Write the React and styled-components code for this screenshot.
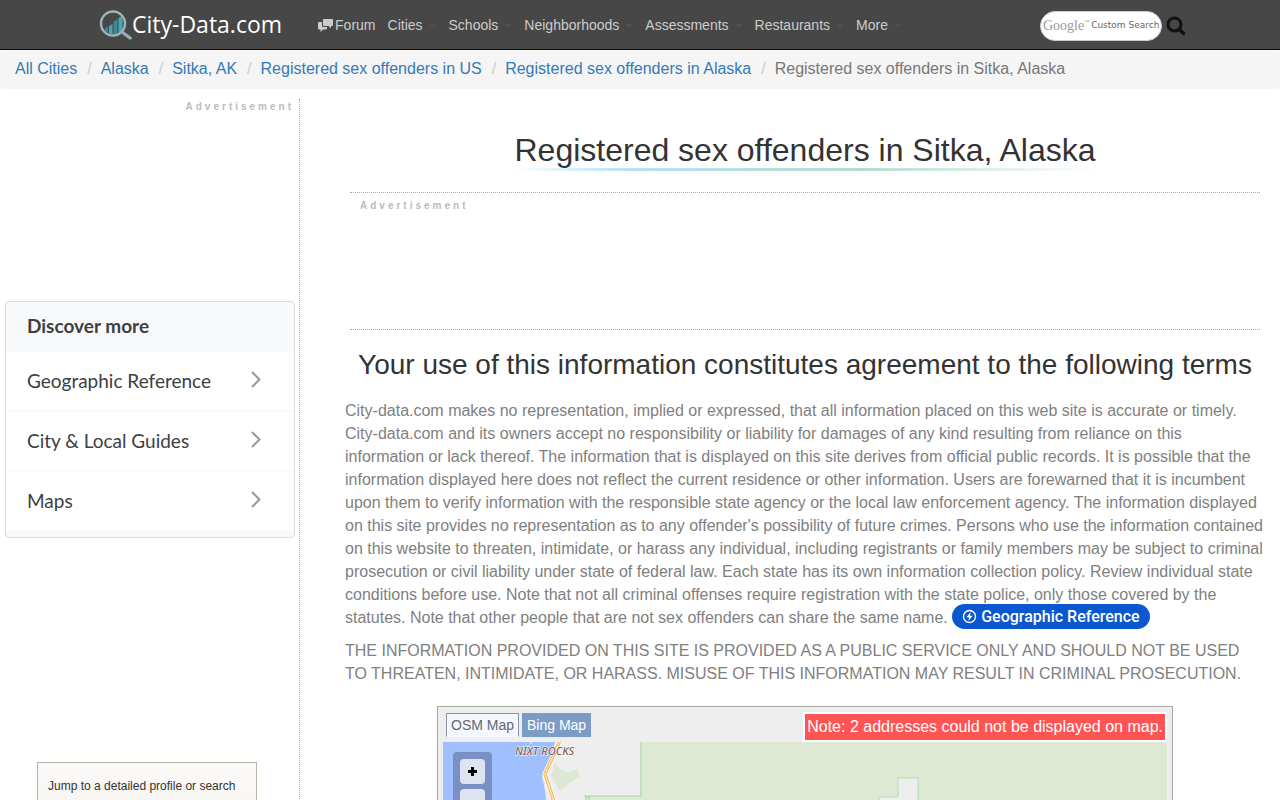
import styled, { createGlobalStyle } from "styled-components";

const GlobalStyle = createGlobalStyle`
  *,
  *::before,
  *::after {
    box-sizing: border-box;
  }

  body {
    margin: 0;
    background-color: #fff;
    color: #808080;
    font-family: "Liberation Sans", Arial, sans-serif;
    font-size: 16px;
    line-height: 23px;
  }

  a {
    color: #337ab7;
    text-decoration: none;
  }

  button,
  input {
    font: inherit;
  }
`;

const Page = styled.div`
  height: 100vh;
  overflow: hidden;
`;

/* header */

const Header = styled.header`
  display: flex;
  align-items: center;
  height: 50px;
  padding: 2px 94px 0 99px;
  background-color: #474747;
  border-bottom: 1px solid #080808;
`;

const Logo = styled.a`
  display: flex;
  align-items: center;
  margin-bottom: 2px;
  color: #fff;
  font-family: "Open Sans", "Noto Sans", sans-serif;
  font-size: 23px;
  font-weight: 500;
  white-space: nowrap;
`;

const Nav = styled.nav`
  display: flex;
  gap: 12px;
  margin-left: 36px;
`;

const NavLink = styled.a`
  display: flex;
  align-items: center;
  gap: ${(props) => (props.$menu ? "6px" : "2px")};
  color: #ccc;
  font-size: 14px;

  ${(props) =>
    props.$menu &&
    `&::after {
      content: "";
      border: 4px solid transparent;
      border-top-color: #4f4f4f;
      border-bottom: 0;
    }`}
`;

const Search = styled.form`
  display: flex;
  align-items: center;
  gap: 4px;
  margin-left: auto;
`;

const SearchBox = styled.label`
  display: flex;
  align-items: center;
  gap: 2px;
  width: 122px;
  height: 30px;
  padding: 0 2px;
  border: 1px solid #ccc;
  border-radius: 15px;
  background-color: #fff;
`;

const SearchBrand = styled.span`
  display: flex;
  color: #999;
  font-family: "Liberation Serif", serif;
  font-size: 14px;

  sup {
    font-size: 5px;
    line-height: 16px;
  }
`;

const SearchInput = styled.input`
  flex: 1;
  min-width: 0;
  padding: 0;
  border: 0;
  outline: 0;
  background: none;
  font-family: "DejaVu Sans", sans-serif;
  font-size: 9px;

  &::placeholder {
    color: #666;
    opacity: 1;
  }
`;

const SearchButton = styled.button`
  display: flex;
  padding: 0;
  border: 0;
  background: none;
`;

const Breadcrumb = styled.ol`
  display: flex;
  margin: 0 0 10px;
  padding: 7px 15px 9px;
  list-style: none;
  background-color: #f5f5f5;
  border-radius: 4px;

  li + li::before {
    content: "/";
    padding: 0 9px 0 10px;
    color: #ccc;
  }
`;

const Crumb = styled.li`
  color: #777;
`;

/* layout */

const Layout = styled.div`
  display: flex;
`;

const Sidebar = styled.aside`
  flex: 0 0 300px;
  display: flex;
  flex-direction: column;
  height: 1200px;
  padding: 0 4px 0 5px;
  border-right: 1px dotted #aaa;
`;

const Main = styled.main`
  flex: 1;
  min-width: 0;
  padding: 33px 15px 0 45px;
`;

const AdLabel = styled.div`
  color: #bbb;
  font-size: 10px;
  font-weight: 700;
  line-height: 15px;
  letter-spacing: 3px;
`;

const SideAd = styled.div`
  height: 202px;
  padding-right: 1px;
  text-align: right;
`;

const Discover = styled.section`
  padding-bottom: 5px;
  border: 1px solid #dadce0;
  border-radius: 4px;
  background-color: #f8f9fa;
  color: #3c4043;
  font-family: Lato, "Open Sans", sans-serif;
  font-size: 19px;
`;

const DiscoverTitle = styled.h2`
  margin: 0;
  padding: 0 21px 2px;
  font-size: 19px;
  font-weight: 700;
  line-height: 48px;
`;

const DiscoverLink = styled.a`
  display: flex;
  align-items: center;
  justify-content: space-between;
  height: 60px;
  padding: 0 33px 2px 21px;
  border-bottom: 2px solid #f8f9fa;
  background-color: #fff;
  color: #3c4043;
`;

const JumpBox = styled.section`
  height: 180px;
  margin: 224px 38px 0 32px;
  padding: 12px 10px;
  border: 1px solid #b9b4aa;
  background: linear-gradient(#fbfaf8, #eceae2);
  color: #333;
  font-size: 12px;
`;

/* main column */

const Title = styled.h1`
  width: fit-content;
  margin: 0 auto 21px;
  border-bottom: 3px solid;
  border-image: linear-gradient(
      to right,
      #fff,
      #b3e2f2 20%,
      #b5dcd2 60%,
      #fff
    )
    1;
  color: #333;
  font-size: 32px;
  font-weight: 400;
  line-height: 36px;
`;

const MainAd = styled.div`
  height: 138px;
  margin: 0 5px;
  padding: 5px 10px;
  border-top: 1px dotted #aaa;
  border-bottom: 1px dotted #aaa;
`;

const Subtitle = styled.h2`
  margin: 19px 0 18px;
  color: #333;
  font-size: 28px;
  font-weight: 400;
  line-height: 32px;
  text-align: center;
`;

const Paragraph = styled.p`
  margin: 0 0 10px;
`;

const TopicLink = styled.a`
  display: inline-flex;
  align-items: center;
  gap: 4px;
  height: 25px;
  margin: -2px 0 0;
  padding: 0 10px;
  border-radius: 13px;
  background-color: #0b57d0;
  color: #fff;
  font-family: Roboto, sans-serif;
  font-weight: 500;
  line-height: 19px;
  vertical-align: bottom;
`;

/* map */

const MapPanel = styled.section`
  max-width: 736px;
  margin: 21px auto 0;
  padding: 5px;
  border: 1px solid #a3a99b;
  background-color: #eee;
`;

const MapBar = styled.div`
  display: flex;
  align-items: flex-end;
  gap: 3px;
  height: 30px;
  padding-left: 3px;
`;

const MapTab = styled.button`
  height: 24px;
  margin-bottom: 5px;
  padding: 0 4px;
  border: 1px solid ${(props) => (props.$active ? "#8a96a3" : "#7b9dc5")};
  border-bottom-color: ${(props) => (props.$active ? "#f4f7fb" : "#7b9dc5")};
  background-color: ${(props) => (props.$active ? "#f4f7fb" : "#7b9dc5")};
  color: ${(props) => (props.$active ? "#667" : "#fff")};
  font-size: 14px;
  line-height: 22px;
`;

const MapNote = styled.div`
  margin-left: auto;
  padding: 1px 2px 2px;
  border: 2px solid #fff;
  background-color: #ff5454;
  color: #fff;
`;

const MapView = styled.div`
  position: relative;
  height: 400px;
  overflow: hidden;
  background-color: #eee;

  svg {
    display: block;
  }
`;

const ZoomControl = styled.div`
  position: absolute;
  top: 10px;
  left: 10px;
  display: flex;
  flex-direction: column;
  gap: 5px;
  padding: 7px;
  border-radius: 4px;
  background-color: #7a90c4;
`;

const ZoomButton = styled.button`
  display: flex;
  align-items: center;
  justify-content: center;
  width: 25px;
  height: 25px;
  padding: 0;
  border: 0;
  border-radius: 4px;
  background-color: #dde3f1;
`;

const crumbs = [
  "All Cities",
  "Alaska",
  "Sitka, AK",
  "Registered sex offenders in US",
  "Registered sex offenders in Alaska",
];

const menus = [
  "Cities",
  "Schools",
  "Neighborhoods",
  "Assessments",
  "Restaurants",
  "More",
];

const topics = ["Geographic Reference", "City & Local Guides", "Maps"];

function LogoMark() {
  return (
    <svg width="33" height="32" viewBox="0 0 33 32" aria-hidden="true">
      <path d="M6 19.500l3-2v6.500l-3-2z" fill="#3d8796" />
      <path d="M10 17l3.500-2v10.500L10 24.500z" fill="#47a5b5" />
      <path d="M14.500 13l4-3v15.500h-4z" fill="#3d8796" />
      <path d="M19.500 9l4-2.500V22l-4 3z" fill="#47a5b5" />
      <circle
        cx="14"
        cy="14.500"
        r="12"
        fill="none"
        stroke="#9fb4ba"
        strokeWidth="2.400"
      />
      <path
        d="M23 23l8 6"
        stroke="#8fb0b8"
        strokeWidth="3.400"
        strokeLinecap="round"
      />
    </svg>
  );
}

function ForumIcon() {
  return (
    <svg width="15" height="13" viewBox="0 0 15 13" aria-hidden="true">
      <path
        d="M6 0h8q1 0 1 1v5q0 1-1 1h-1v2.500L10.500 7H6q-1 0-1-1V1q0-1 1-1z"
        fill="#ccc"
      />
      <path
        d="M1 3h3v3.500Q4 8 5.500 8H9v1.500q0 1-1 1H5L2.500 13v-2.500H1q-1 0-1-1V4q0-1 1-1z"
        fill="#ccc"
      />
    </svg>
  );
}

function SearchIcon() {
  return (
    <svg width="20" height="20" viewBox="0 0 20 20" aria-hidden="true">
      <circle
        cx="8.500"
        cy="8.500"
        r="6.500"
        fill="none"
        stroke="#111"
        strokeWidth="3"
      />
      <path
        d="M13.500 13.500l4 4"
        stroke="#111"
        strokeWidth="3.400"
        strokeLinecap="round"
      />
    </svg>
  );
}

function Chevron() {
  return (
    <svg width="10" height="18" viewBox="0 0 10 18" aria-hidden="true">
      <path
        d="M1 1l7.500 7.500L1 16"
        fill="none"
        stroke="#999"
        strokeWidth="2"
      />
    </svg>
  );
}

function BoltIcon() {
  return (
    <svg width="15" height="15" viewBox="0 0 15 15" aria-hidden="true">
      <circle
        cx="7.500"
        cy="7.500"
        r="6"
        fill="none"
        stroke="#fff"
        strokeWidth="1.400"
      />
      <path d="M8.500 3L4.500 8.200h2.500L6.500 12l4-5.200H8z" fill="#fff" />
    </svg>
  );
}

function MapTiles() {
  return (
    <svg width="100%" height="400" aria-hidden="true">
      <path
        d="M0 0h112l-3 12-6 12-4 10 3 14 2 20v332H0z"
        fill="#9fbfff"
      />
      <path
        d="M112 22l8 7 5 2 9-4 3 8-8 4-12 10-5-8-4-8z"
        fill="#dde8d2"
      />
      <path
        d="M198-2h1200v402H146V54h52z"
        fill="#dde9d3"
        stroke="#b5dcb4"
        strokeWidth="1.500"
      />
      <path
        d="M436 402V55h19V36h20v366z"
        fill="#eee"
        stroke="#b5dcb4"
        strokeWidth="1"
      />
      <path d="M146 54l-5-1 2 6z" fill="#b5dcb4" />
      <path
        d="M117-2l-6 14-9 20 4 12 5 16 8 30"
        fill="none"
        stroke="#fff"
        strokeWidth="5"
      />
      <path
        d="M117-2l-6 14-9 20 4 12 5 16 8 30"
        fill="none"
        stroke="#eeb765"
        strokeWidth="3.500"
      />
      <path
        d="M117-2l-6 14-9 20 4 12 5 16 8 30"
        fill="none"
        stroke="#fbe3b0"
        strokeWidth="1.500"
      />
      <path d="M88-1v3" stroke="#fff" />
      <text
        x="72"
        y="13"
        fill="#85605d"
        stroke="#fff"
        strokeWidth="1"
        paintOrder="stroke"
        fontFamily="Noto Sans, sans-serif"
        fontSize="11"
        fontWeight="500"
        fontStyle="italic"
      >
        NIXT ROCKS
      </text>
    </svg>
  );
}

function App() {
  return (
    <Page>
      <GlobalStyle />
      <Header>
        <Logo href="#">
          <LogoMark />
          City-Data.com
        </Logo>
        <Nav>
          <NavLink href="#">
            <ForumIcon />
            Forum
          </NavLink>
          {menus.map((menu) => (
            <NavLink key={menu} href="#" $menu>
              {menu}
            </NavLink>
          ))}
        </Nav>
        <Search>
          <SearchBox>
            <SearchBrand>
              Google<sup>™</sup>
            </SearchBrand>
            <SearchInput type="text" placeholder="Custom Search" />
          </SearchBox>
          <SearchButton type="button" aria-label="Search">
            <SearchIcon />
          </SearchButton>
        </Search>
      </Header>

      <Breadcrumb>
        {crumbs.map((crumb) => (
          <Crumb key={crumb}>
            <a href="#">{crumb}</a>
          </Crumb>
        ))}
        <Crumb>Registered sex offenders in Sitka, Alaska</Crumb>
      </Breadcrumb>

      <Layout>
        <Sidebar>
          <SideAd>
            <AdLabel>Advertisement</AdLabel>
          </SideAd>
          <Discover>
            <DiscoverTitle>Discover more</DiscoverTitle>
            {topics.map((topic) => (
              <DiscoverLink key={topic} href="#">
                {topic}
                <Chevron />
              </DiscoverLink>
            ))}
          </Discover>
          <JumpBox>Jump to a detailed profile or search</JumpBox>
        </Sidebar>

        <Main>
          <Title>Registered sex offenders in Sitka, Alaska</Title>
          <MainAd>
            <AdLabel>Advertisement</AdLabel>
          </MainAd>
          <Subtitle>
            Your use of this information constitutes agreement to the following
            terms
          </Subtitle>
          <Paragraph>
            City-data.com makes no representation, implied or expressed, that
            all information placed on this web site is accurate or timely.
            City-data.com and its owners accept no responsibility or liability
            for damages of any kind resulting from reliance on this information
            or lack thereof. The information that is displayed on this site
            derives from official public records. It is possible that the
            information displayed here does not reflect the current residence or
            other information. Users are forewarned that it is incumbent upon
            them to verify information with the responsible state agency or the
            local law enforcement agency. The information displayed on this site
            provides no representation as to any offender's possibility of
            future crimes. Persons who use the information contained on this
            website to threaten, intimidate, or harass any individual, including
            registrants or family members may be subject to criminal prosecution
            or civil liability under state of federal law. Each state has its
            own information collection policy. Review individual state
            conditions before use. Note that not all criminal offenses require
            registration with the state police, only those covered by the
            statutes. Note that other people that are not sex offenders can
            share the same name.{" "}
            <TopicLink href="#">
              <BoltIcon />
              Geographic Reference
            </TopicLink>
          </Paragraph>
          <Paragraph>
            THE INFORMATION PROVIDED ON THIS SITE IS PROVIDED AS A PUBLIC
            SERVICE ONLY AND SHOULD NOT BE USED TO THREATEN, INTIMIDATE, OR
            HARASS. MISUSE OF THIS INFORMATION MAY RESULT IN CRIMINAL
            PROSECUTION.
          </Paragraph>

          <MapPanel>
            <MapBar>
              <MapTab type="button" $active>
                OSM Map
              </MapTab>
              <MapTab type="button">Bing Map</MapTab>
              <MapNote>Note: 2 addresses could not be displayed on map.</MapNote>
            </MapBar>
            <MapView>
              <MapTiles />
              <ZoomControl>
                <ZoomButton type="button" aria-label="Zoom in">
                  <svg width="9" height="9" aria-hidden="true">
                    <path d="M3 0h3v3h3v3H6v3H3V6H0V3h3z" />
                  </svg>
                </ZoomButton>
                <ZoomButton type="button" aria-label="Zoom out">
                  <svg width="9" height="9" aria-hidden="true">
                    <path d="M0 3h9v3H0z" />
                  </svg>
                </ZoomButton>
              </ZoomControl>
            </MapView>
          </MapPanel>
        </Main>
      </Layout>
    </Page>
  );
}

export default App;
